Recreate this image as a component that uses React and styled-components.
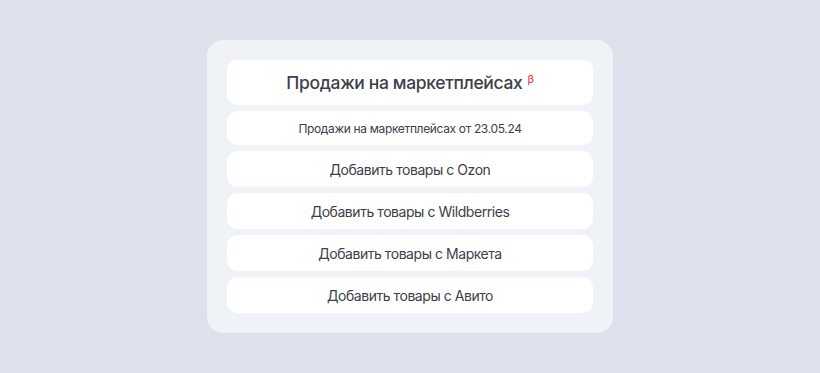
import React from 'react';
import styled, { createGlobalStyle } from 'styled-components';

const GlobalStyle = createGlobalStyle`
  html, body {
    margin: 0;
    padding: 0;
    background: #dce1ec;
  }
  body {
    font-family: 'Inter', 'Noto Sans', sans-serif;
    -webkit-font-smoothing: antialiased;
  }
`;

const Page = styled.div`
  width: 820px;
  height: 373px;
  display: flex;
  align-items: center;
  justify-content: center;
`;

const Panel = styled.div`
  width: 366px;
  padding: 20px;
  background: #eff2f7;
  border-radius: 16px;
  display: flex;
  flex-direction: column;
  gap: 6px;
`;

const Item = styled.div`
  height: ${p => p.h}px;
  background: #ffffff;
  border-radius: 10px;
  display: flex;
  align-items: center;
  justify-content: center;
  color: #3c4049;
  font-size: ${p => p.size}px;
  font-weight: ${p => p.weight || 400};
  letter-spacing: ${p => p.ls}px;
`;

const Beta = styled.sup`
  color: #e5322d;
  font-size: 11px;
  font-weight: 400;
  margin-left: 5px;
  position: relative;
  top: -4px;
`;

const buttons = ['Ozon', 'Wildberries', 'Маркета', 'Авито'];

export default function App() {
  return (
    <Page>
      <GlobalStyle />
      <Panel>
        <Item h={45} size={17.5} weight={500} ls={-0.35}>
          Продажи на маркетплейсах<Beta>β</Beta>
        </Item>
        <Item h={34} size={12} ls={-0.35}>Продажи на маркетплейсах от 23.05.24</Item>
        {buttons.map(b => (
          <Item key={b} h={36} size={14} ls={-0.45}>Добавить товары с {b}</Item>
        ))}
      </Panel>
    </Page>
  );
}
